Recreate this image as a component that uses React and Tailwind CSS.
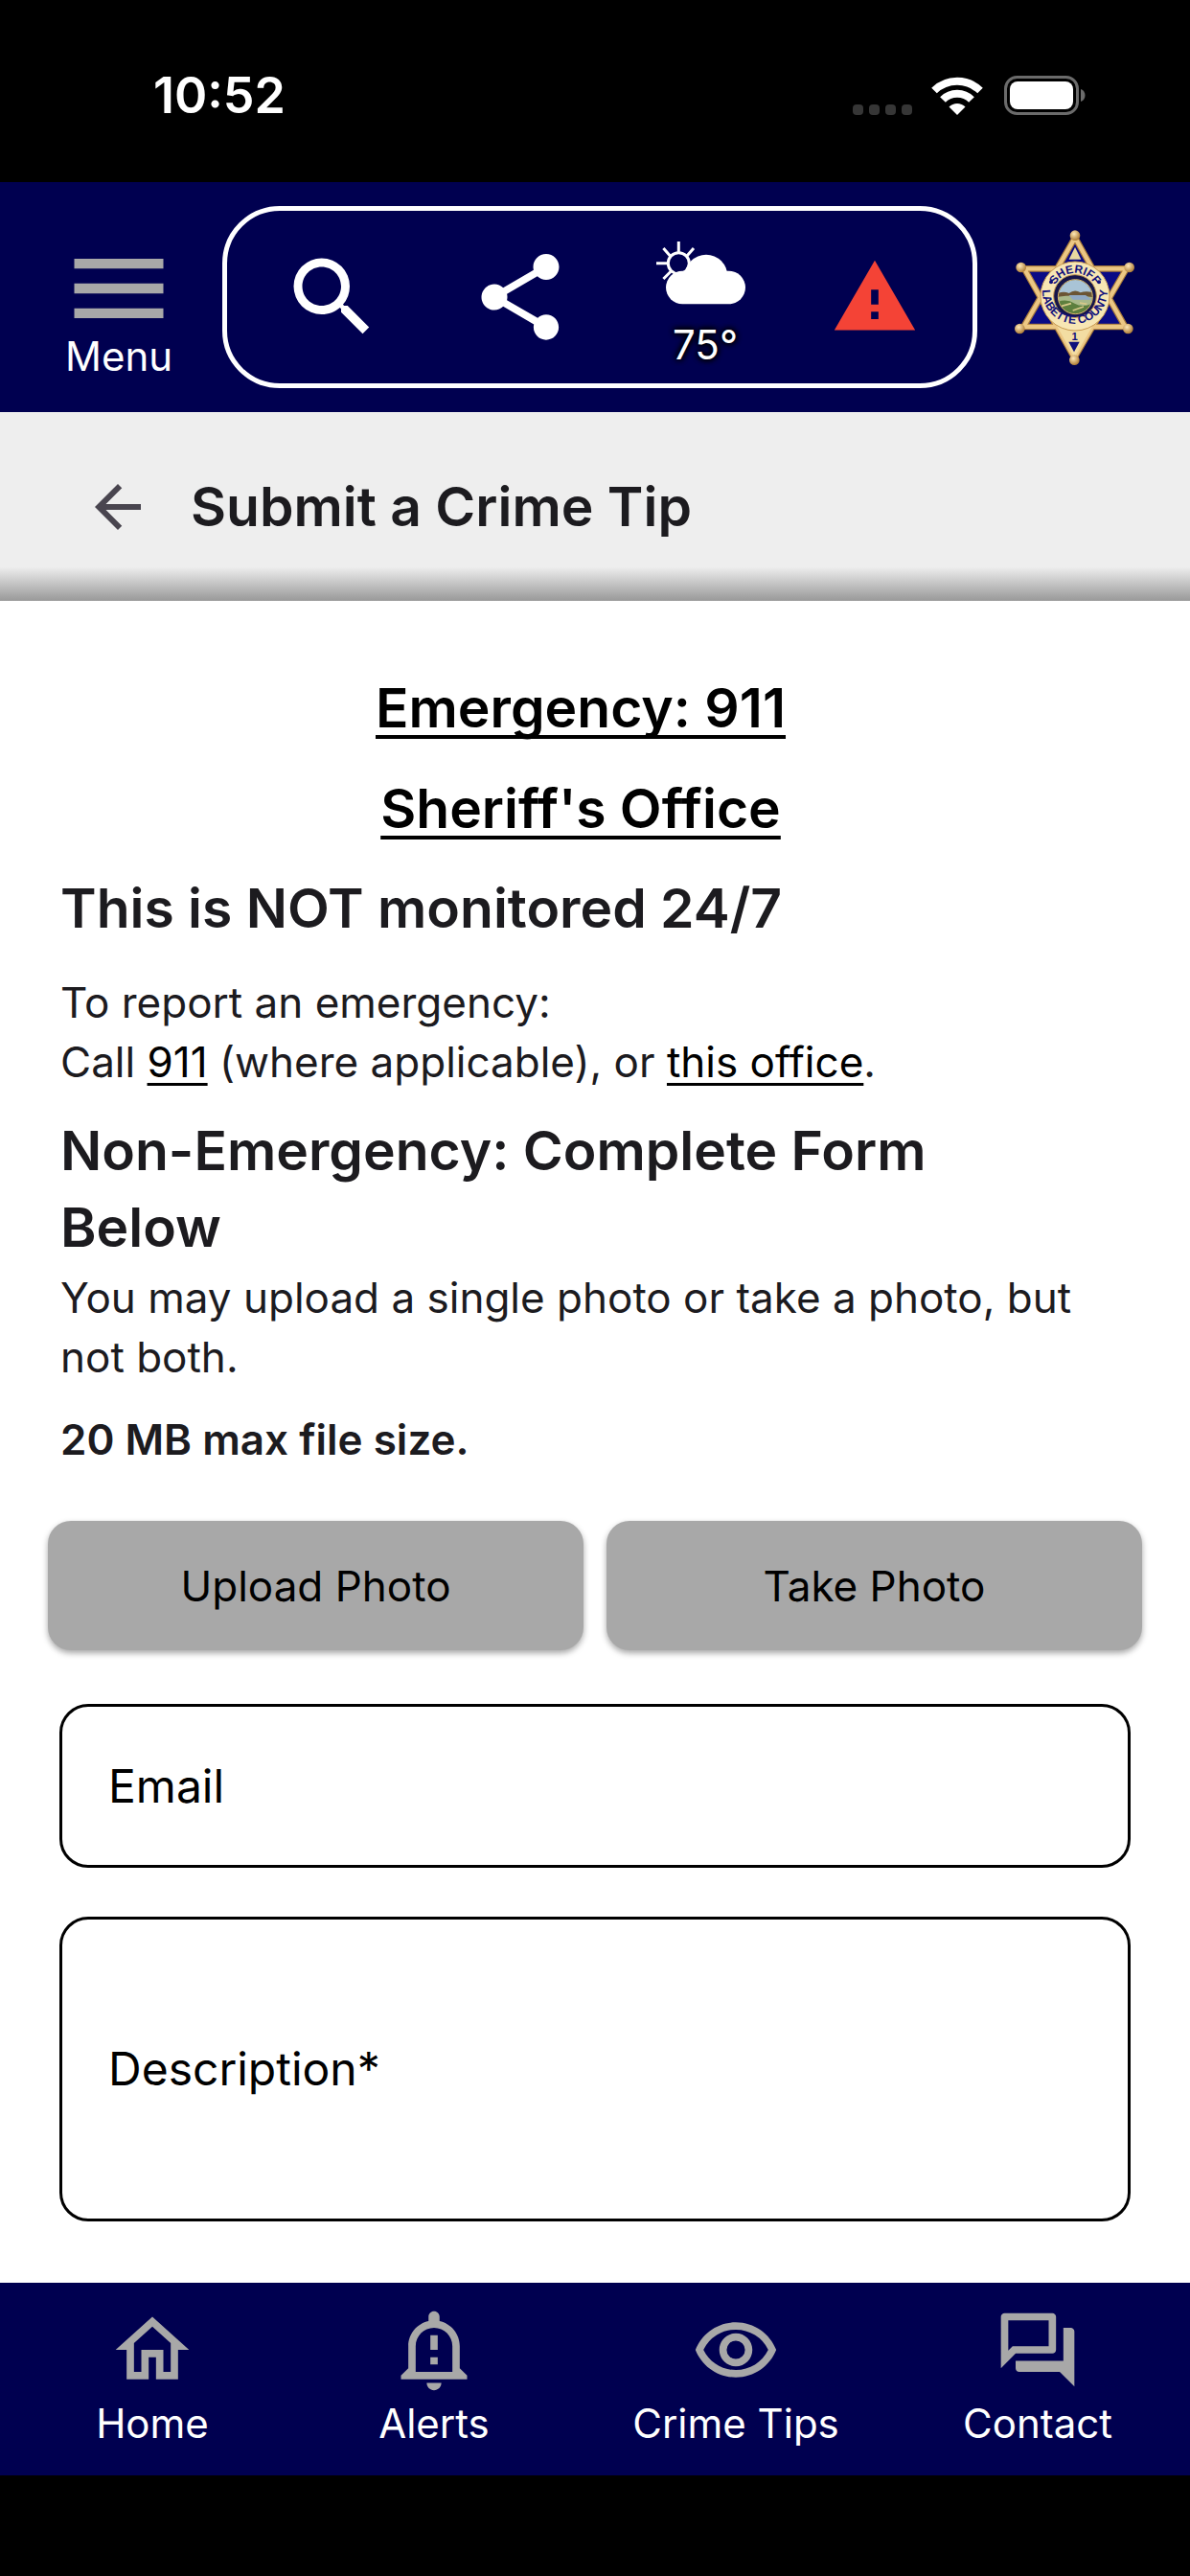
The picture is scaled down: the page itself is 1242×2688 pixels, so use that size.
import React from "react";
import {
  MdArrowBack,
  MdMenu,
  MdOutlineForum,
  MdOutlineHome,
  MdOutlineNotificationImportant,
  MdOutlineRemoveRedEye,
  MdSearch,
  MdShare,
  MdWarning,
} from "react-icons/md";

const navItems = [
  { label: "Home", icon: MdOutlineHome },
  { label: "Alerts", icon: MdOutlineNotificationImportant },
  { label: "Crime Tips", icon: MdOutlineRemoveRedEye },
  { label: "Contact", icon: MdOutlineForum },
];

function WifiIcon() {
  return (
    <svg width="54" height="40" viewBox="0 0 54 40" fill="none" stroke="#fff">
      <path d="M3 14.5A34.5 34.5 0 0 1 51 14.5" strokeWidth="8" />
      <path d="M12 24A21 21 0 0 1 42 24" strokeWidth="8" />
      <path d="M18.500 31.500A12 12 0 0 1 35.500 31.500L27 40Z" fill="#fff" stroke="none" />
    </svg>
  );
}

function BatteryIcon() {
  return (
    <svg width="86" height="42" viewBox="0 0 86 42">
      <rect x="1.500" y="1.500" width="75" height="38" rx="12" fill="none" stroke="#6b6b6b" strokeWidth="3" />
      <rect x="6" y="6" width="66" height="29" rx="8" fill="#fff" />
      <path d="M80 14c6 2 6 11 0 13z" fill="#6b6b6b" />
    </svg>
  );
}

function WeatherIcon() {
  return (
    <svg width="94" height="66" viewBox="0 0 94 66">
      <g fill="none" stroke="#fff" strokeWidth="3">
        <circle cx="23.300" cy="22.700" r="11" />
        <path d="M23.300 0v11M39 7l-7 8M7.400 7l7 8M0 22.700h11M7.400 39l8-8" />
      </g>
      <circle cx="52" cy="36" r="22.300" fill="#fff" />
      <rect x="10" y="30.700" width="83" height="34.600" rx="17.300" fill="#fff" />
    </svg>
  );
}

function SheriffBadge() {
  const tips = [
    [247, 75],
    [417, 175],
    [413, 367],
    [245, 465],
    [74, 367],
    [78, 175],
  ];

  return (
    <svg width="128" height="143" viewBox="55 55 384 429">
      <defs>
        <radialGradient id="ball" cx="0.4" cy="0.35" r="0.7">
          <stop offset="0" stopColor="#ffe9b8" />
          <stop offset="1" stopColor="#a8742c" />
        </radialGradient>
        <clipPath id="seal">
          <circle cx="248" cy="267" r="53" />
        </clipPath>
        <path id="topArc" d="M175 265A72 72 0 0 1 319 265" />
        <path id="bottomArc" d="M146.500 232A102 102 0 1 0 347.500 232" />
      </defs>

      <g strokeLinejoin="round">
        <path d="M247 82L404 361H86Z M245 458L88 179H408Z" fill="#0a0a85" stroke="#a87a3a" strokeWidth="20" />
        <path d="M247 82L404 361H86Z M245 458L88 179H408Z" fill="none" stroke="#ecc784" strokeWidth="13" />
      </g>
      <path d="M190 358H302L245 458Z" fill="#f3dda2" />
      <path d="M247 112L266 150H228Z" fill="#e9d9a0" />
      <path d="M227 408H261L244 440Z" fill="#10107c" />

      {tips.map(([x, y]) => (
        <circle key={`${x}-${y}`} cx={x} cy={y} r="16" fill="url(#ball)" />
      ))}

      <circle cx="247" cy="265" r="108" fill="#f7e6b4" stroke="#c79a52" strokeWidth="3" />
      <circle cx="247" cy="265" r="67" fill="#15154a" stroke="#c79a52" strokeWidth="3" />
      <g clipPath="url(#seal)">
        <rect x="190" y="210" width="120" height="120" fill="#a9c4d6" />
        <path d="M190 258q20-10 38-2q18-14 36-2q20-8 46 2v80H190Z" fill="#6b5534" />
        <path d="M190 268q60-10 120 2v60H190Z" fill="#a9b98a" />
        <path d="M228 262h52l20 14h-60Z" fill="#8fa9c4" />
        <path d="M190 284q30-12 56 4t64-4v46H190Z" fill="#5d7f3e" />
        <path d="M205 296l30-8M240 310l34-12M262 286l22 4" stroke="#d8c98a" strokeWidth="5" />
      </g>
      <circle cx="248" cy="267" r="54" fill="none" stroke="#d9b865" strokeWidth="3" />
      <circle cx="172" cy="221" r="6" fill="#10107c" />
      <circle cx="322" cy="221" r="6" fill="#10107c" />

      <g fill="#10107c" fontFamily="Liberation Sans, sans-serif" fontWeight="700" textAnchor="middle">
        <text fontSize="36">
          <textPath href="#topArc" startOffset="50%">SHERIFF</textPath>
        </text>
        <text fontSize="36">
          <textPath href="#bottomArc" startOffset="50%">LABETTE COUNTY</textPath>
        </text>
        <text x="246" y="403" fontSize="34">1</text>
      </g>
    </svg>
  );
}

function StatusBar() {
  return (
    <div className="flex h-[190px] items-center justify-between bg-black pt-2.5 pr-[108px] pl-40">
      <span className="text-[52px] leading-[60px] font-semibold">10:52</span>
      <div className="flex items-center">
        <div className="mt-7 mr-5 flex gap-1.5">
          <span className="size-[11px] rounded bg-[#363636]" />
          <span className="size-[11px] rounded bg-[#363636]" />
          <span className="size-[11px] rounded bg-[#363636]" />
          <span className="size-[11px] rounded bg-[#363636]" />
        </div>
        <div className="mr-[22px]">
          <WifiIcon />
        </div>
        <BatteryIcon />
      </div>
    </div>
  );
}

function Header() {
  return (
    <header className="flex items-center bg-[#000050] py-[25px] pr-14 pl-[62px]">
      <button className="mt-6 flex w-[124px] flex-col items-center self-start">
        <MdMenu className="size-[124px] text-[#a8a8a8]" />
        <span className="-mt-4 text-[42px] leading-[50px]">Menu</span>
      </button>

      <div className="mr-[38px] ml-[46px] flex h-[190px] flex-1 items-center justify-around rounded-[60px] border-[5px] border-white px-3">
        <button aria-label="Search">
          <MdSearch className="size-[108px]" />
        </button>
        <button aria-label="Share">
          <MdShare className="size-[108px]" />
        </button>
        <button className="mt-8 flex flex-col items-center gap-[22px] self-start">
          <WeatherIcon />
          <span className="pl-2 text-[42px] leading-10 [text-shadow:0_0_6px_#000,0_0_6px_#000,0_0_6px_#000]">
            75°
          </span>
        </button>
        <button aria-label="Warnings">
          <MdWarning className="size-[92px] text-[#f44336]" />
        </button>
      </div>

      <a href="#about" aria-label="Sheriff's Office">
        <SheriffBadge />
      </a>
    </header>
  );
}

function App() {
  return (
    <div className="flex min-h-screen flex-col bg-white font-['Inter',sans-serif] text-white">
      <StatusBar />
      <Header />

      <div className="flex h-[197px] items-center gap-10 bg-[linear-gradient(to_bottom,#eeeeee_82%,#999999)] pl-[87px] text-[#1c1b1f]">
        <button aria-label="Back">
          <MdArrowBack className="size-[72px] text-[#49454f]" />
        </button>
        <h1 className="text-[57px] leading-[80px] font-semibold">Submit a Crime Tip</h1>
      </div>

      <main className="flex-1 pt-[72px] pb-16 text-[#1c1b1f]">
        <div className="pr-[93px] pl-[63px]">
          <div className="flex flex-col items-center gap-[25px] text-[57px] leading-[80px] font-semibold text-black">
            <a href="tel:911" className="underline decoration-[4px] underline-offset-8 [text-decoration-skip-ink:none]">
              Emergency: 911
            </a>
            <a href="#office" className="underline decoration-[4px] underline-offset-8 [text-decoration-skip-ink:none]">
              Sheriff's Office
            </a>
          </div>
          <h2 className="mt-6 text-[57px] leading-[80px] font-semibold">This is NOT monitored 24/7</h2>
          <p className="mt-[27px] text-[44px] leading-[62px]">
            To report an emergency:
            <br />
            Call{" "}
            <a href="tel:911" className="text-black underline decoration-[3px] underline-offset-[6px]">
              911
            </a>{" "}
            (where applicable), or{" "}
            <a href="#office" className="text-black underline decoration-[3px] underline-offset-[6px]">
              this office
            </a>
            .
          </p>
          <h2 className="mt-[22px] pr-12 text-[57px] leading-[80px] font-semibold">
            Non-Emergency: Complete Form Below
          </h2>
          <p className="mt-0.5 text-[44px] leading-[62px]">
            You may upload a single photo or take a photo, but not both.
          </p>
          <p className="mt-6 text-[44px] leading-[62px] font-semibold">20 MB max file size.</p>
        </div>

        <form>
          <div className="mt-[54px] flex gap-6 px-[50px] text-[44px] text-black">
            <button type="button" className="h-[135px] flex-1 rounded-3xl bg-[#a8a8a8] shadow-[0_3px_6px_rgba(0,0,0,0.35)]">
              Upload Photo
            </button>
            <button type="button" className="h-[135px] flex-1 rounded-3xl bg-[#a8a8a8] shadow-[0_3px_6px_rgba(0,0,0,0.35)]">
              Take Photo
            </button>
          </div>

          <div className="mt-14 flex flex-col gap-[51px] px-[62px] text-[48px] leading-[60px] text-black">
            <div className="flex h-[171px] items-center gap-4 rounded-[30px] border-[3px] border-black px-12">
              <label htmlFor="email">Email</label>
              <input id="email" type="email" className="min-w-0 flex-1 outline-none" />
            </div>
            <div className="flex h-[318px] items-center gap-4 rounded-[30px] border-[3px] border-black px-12">
              <label htmlFor="description">Description*</label>
              <textarea id="description" rows={4} className="min-w-0 flex-1 resize-none outline-none" />
            </div>
          </div>
        </form>
      </main>

      <nav className="grid h-[201px] grid-cols-[7fr_7fr_8fr_7fr] bg-[#000050] px-3 pt-6">
        {navItems.map((item) => (
          <a key={item.label} href="#" className="flex flex-col items-center text-[42px] leading-[50px]">
            <item.icon className="size-[92px] text-[#a8a8a8]" />
            <span className="mt-1.5">{item.label}</span>
          </a>
        ))}
      </nav>
      <div className="h-[105px] bg-black" />
    </div>
  );
}

export default App;
